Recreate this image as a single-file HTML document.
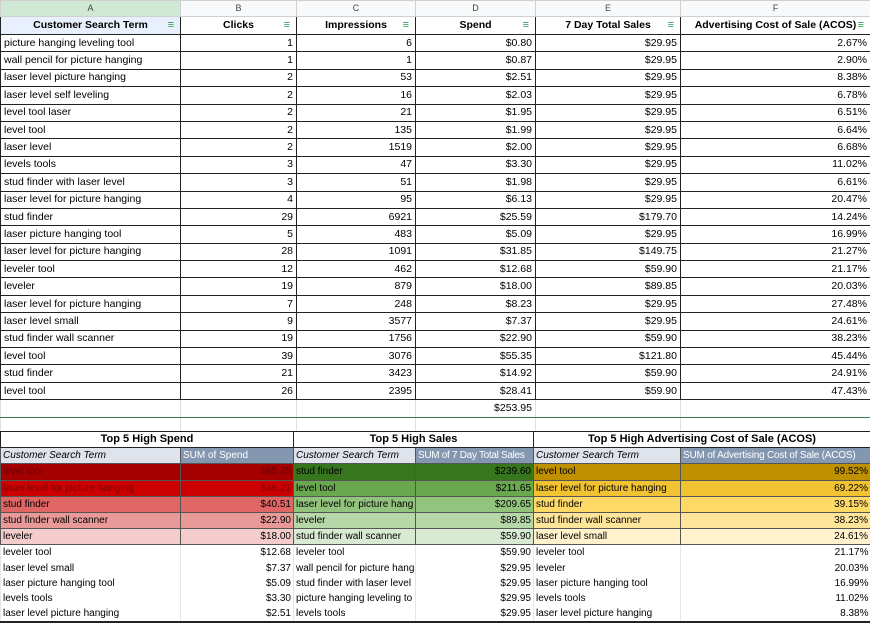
<!DOCTYPE html>
<html><head><meta charset="utf-8"><style>
body{margin:0;width:870px;height:625px;overflow:hidden;background:#fff;font-family:"Liberation Sans",Arial,sans-serif;font-size:10.5px;color:#000}
table{border-collapse:collapse;table-layout:fixed;position:absolute;left:0}
td{padding:0 3px;white-space:nowrap;overflow:hidden;line-height:15px}
#t1{top:0;width:870px}
#t1 td{border:1px solid #222;height:16.4px;text-align:right}
#t1 td:first-child{text-align:left}
#t1 tr.let td{background:#f8f9fa;border:1px solid #d0d0d0;text-align:center;font-size:9px;color:#444;height:15px}
#t1 tr.let td:first-child{background:#cfe9d4;text-align:center}
#t1 tr.hd td{font-weight:bold;text-align:center;height:17px;position:relative}
#t1 tr.hd td:first-child{background:#e8f0fe;text-align:center}
.f{position:absolute;right:6px;top:1px;color:#2e9a57;font-weight:normal;font-size:11px}
#t1 tr.tot td{border:none;border-left:1px solid #e0e0e0;border-bottom:1px solid #3a7d45}
#t1 tr.bl td{border:none;border-left:1px solid #e0e0e0;height:13px}
#t2{top:431px;width:870px;font-size:10px}
#t2 td{height:15.2px;border-left:1px solid #e6e6e6;padding:0 2px}
#t2 tr.ti td{font-weight:bold;text-align:center;border:1px solid #222;font-size:11px}
#t2 tr.h td{font-style:italic;background:#dfe3ec;border:1px solid #555}
#t2 tr.h td.s{background:#8497b0;color:#fff;font-style:normal}
#t2 td.r{text-align:right}
#t2 tr.c td{border:1px solid #555}
#t2 tr:last-child td{border-bottom:2px solid #222}
</style></head><body>
<table id="t1"><colgroup><col style="width:180px"><col style="width:116px"><col style="width:119px"><col style="width:120px"><col style="width:145px"><col style="width:190px"></colgroup>
<tr class="let"><td>A</td><td>B</td><td>C</td><td>D</td><td>E</td><td>F</td></tr>
<tr class="hd"><td>Customer Search Term<span class="f">≡</span></td><td>Clicks<span class="f">≡</span></td><td>Impressions<span class="f">≡</span></td><td>Spend<span class="f">≡</span></td><td>7 Day Total Sales<span class="f">≡</span></td><td>Advertising Cost of Sale (ACOS)<span class="f">≡</span></td></tr>
<tr><td>picture hanging leveling tool</td><td>1</td><td>6</td><td>$0.80</td><td>$29.95</td><td>2.67%</td></tr>
<tr><td>wall pencil for picture hanging</td><td>1</td><td>1</td><td>$0.87</td><td>$29.95</td><td>2.90%</td></tr>
<tr><td>laser level picture hanging</td><td>2</td><td>53</td><td>$2.51</td><td>$29.95</td><td>8.38%</td></tr>
<tr><td>laser level self leveling</td><td>2</td><td>16</td><td>$2.03</td><td>$29.95</td><td>6.78%</td></tr>
<tr><td>level tool laser</td><td>2</td><td>21</td><td>$1.95</td><td>$29.95</td><td>6.51%</td></tr>
<tr><td>level tool</td><td>2</td><td>135</td><td>$1.99</td><td>$29.95</td><td>6.64%</td></tr>
<tr><td>laser level</td><td>2</td><td>1519</td><td>$2.00</td><td>$29.95</td><td>6.68%</td></tr>
<tr><td>levels tools</td><td>3</td><td>47</td><td>$3.30</td><td>$29.95</td><td>11.02%</td></tr>
<tr><td>stud finder with laser level</td><td>3</td><td>51</td><td>$1.98</td><td>$29.95</td><td>6.61%</td></tr>
<tr><td>laser level for picture hanging</td><td>4</td><td>95</td><td>$6.13</td><td>$29.95</td><td>20.47%</td></tr>
<tr><td>stud finder</td><td>29</td><td>6921</td><td>$25.59</td><td>$179.70</td><td>14.24%</td></tr>
<tr><td>laser picture hanging tool</td><td>5</td><td>483</td><td>$5.09</td><td>$29.95</td><td>16.99%</td></tr>
<tr><td>laser level for picture hanging</td><td>28</td><td>1091</td><td>$31.85</td><td>$149.75</td><td>21.27%</td></tr>
<tr><td>leveler tool</td><td>12</td><td>462</td><td>$12.68</td><td>$59.90</td><td>21.17%</td></tr>
<tr><td>leveler</td><td>19</td><td>879</td><td>$18.00</td><td>$89.85</td><td>20.03%</td></tr>
<tr><td>laser level for picture hanging</td><td>7</td><td>248</td><td>$8.23</td><td>$29.95</td><td>27.48%</td></tr>
<tr><td>laser level small</td><td>9</td><td>3577</td><td>$7.37</td><td>$29.95</td><td>24.61%</td></tr>
<tr><td>stud finder wall scanner</td><td>19</td><td>1756</td><td>$22.90</td><td>$59.90</td><td>38.23%</td></tr>
<tr><td>level tool</td><td>39</td><td>3076</td><td>$55.35</td><td>$121.80</td><td>45.44%</td></tr>
<tr><td>stud finder</td><td>21</td><td>3423</td><td>$14.92</td><td>$59.90</td><td>24.91%</td></tr>
<tr><td>level tool</td><td>26</td><td>2395</td><td>$28.41</td><td>$59.90</td><td>47.43%</td></tr>
<tr class="tot"><td></td><td></td><td></td><td>$253.95</td><td></td><td></td></tr>
<tr class="bl"><td></td><td></td><td></td><td></td><td></td><td></td></tr>
</table>
<table id="t2"><colgroup><col style="width:180px"><col style="width:113px"><col style="width:122px"><col style="width:118px"><col style="width:147px"><col style="width:190px"></colgroup>
<tr class="ti"><td colspan="2">Top 5 High Spend</td><td colspan="2">Top 5 High Sales</td><td colspan="2">Top 5 High Advertising Cost of Sale (ACOS)</td></tr>
<tr class="h"><td>Customer Search Term</td><td class="s">SUM of Spend</td><td>Customer Search Term</td><td class="s" style="letter-spacing:-0.3px">SUM of 7 Day Total Sales</td><td>Customer Search Term</td><td class="s" style="letter-spacing:-0.2px">SUM of Advertising Cost of Sale (ACOS)</td></tr>
<tr class="c"><td style="background:#a40000;color:#6a0000">level tool</td><td class="r" style="background:#a40000;color:#6a0000">$85.75</td><td style="background:#38761d">stud finder</td><td class="r" style="background:#38761d">$239.60</td><td style="background:#bf9000">level tool</td><td class="r" style="background:#bf9000">99.52%</td></tr>
<tr class="c"><td style="background:#cc0000;color:#800000">laser level for picture hanging</td><td class="r" style="background:#cc0000;color:#800000">$46.21</td><td style="background:#6aa84f">level tool</td><td class="r" style="background:#6aa84f">$211.65</td><td style="background:#f1c232">laser level for picture hanging</td><td class="r" style="background:#f1c232">69.22%</td></tr>
<tr class="c"><td style="background:#e06666">stud finder</td><td class="r" style="background:#e06666">$40.51</td><td style="background:#93c47d">laser level for picture hang</td><td class="r" style="background:#93c47d">$209.65</td><td style="background:#ffd966">stud finder</td><td class="r" style="background:#ffd966">39.15%</td></tr>
<tr class="c"><td style="background:#ea9999">stud finder wall scanner</td><td class="r" style="background:#ea9999">$22.90</td><td style="background:#b6d7a8">leveler</td><td class="r" style="background:#b6d7a8">$89.85</td><td style="background:#ffe599">stud finder wall scanner</td><td class="r" style="background:#ffe599">38.23%</td></tr>
<tr class="c"><td style="background:#f4cccc">leveler</td><td class="r" style="background:#f4cccc">$18.00</td><td style="background:#d9ead3">stud finder wall scanner</td><td class="r" style="background:#d9ead3">$59.90</td><td style="background:#fff2cc">laser level small</td><td class="r" style="background:#fff2cc">24.61%</td></tr>
<tr><td>leveler tool</td><td class="r">$12.68</td><td>leveler tool</td><td class="r">$59.90</td><td>leveler tool</td><td class="r">21.17%</td></tr>
<tr><td>laser level small</td><td class="r">$7.37</td><td>wall pencil for picture hang</td><td class="r">$29.95</td><td>leveler</td><td class="r">20.03%</td></tr>
<tr><td>laser picture hanging tool</td><td class="r">$5.09</td><td>stud finder with laser level</td><td class="r">$29.95</td><td>laser picture hanging tool</td><td class="r">16.99%</td></tr>
<tr><td>levels tools</td><td class="r">$3.30</td><td>picture hanging leveling to</td><td class="r">$29.95</td><td>levels tools</td><td class="r">11.02%</td></tr>
<tr><td>laser level picture hanging</td><td class="r">$2.51</td><td>levels tools</td><td class="r">$29.95</td><td>laser level picture hanging</td><td class="r">8.38%</td></tr>
</table>
</body></html>
